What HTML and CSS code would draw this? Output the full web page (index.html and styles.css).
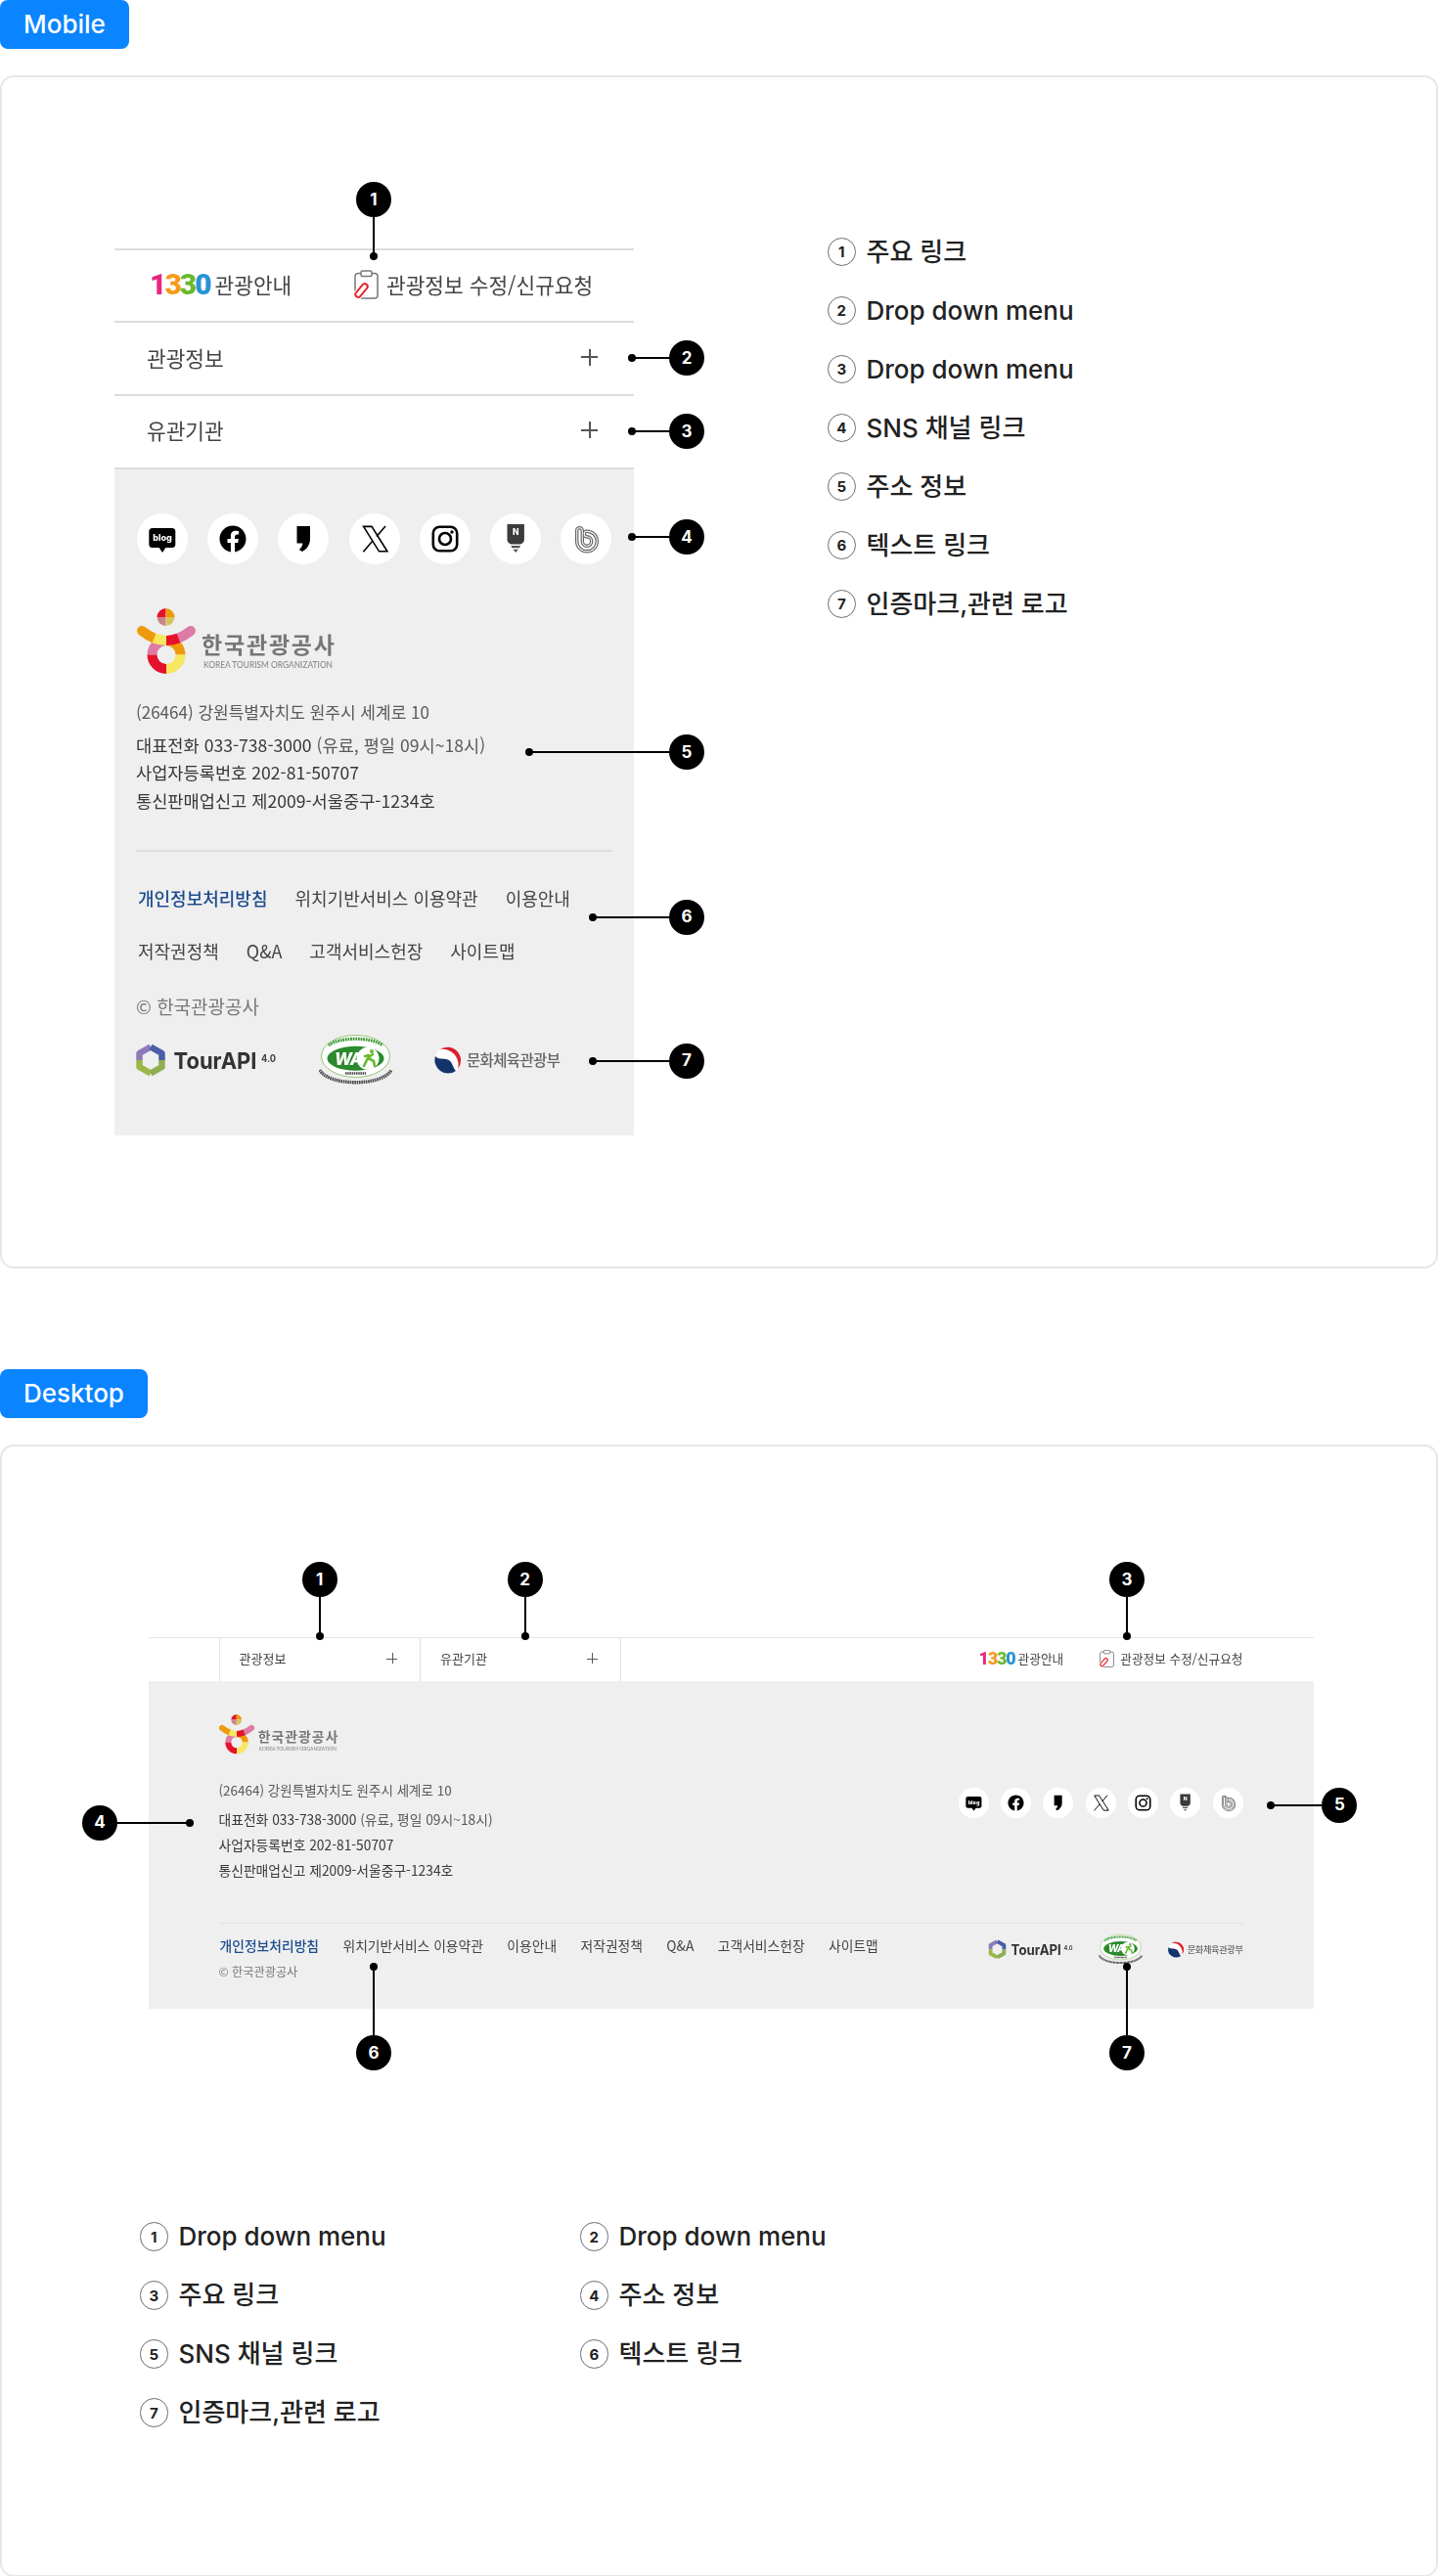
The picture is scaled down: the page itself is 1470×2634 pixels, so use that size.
FILE: index.html
```html
<!DOCTYPE html>
<html lang="ko">
<head>
<meta charset="utf-8">
<title>Footer guide</title>
<link rel="stylesheet" href="styles.css">
</head>
<body>
<svg class="defs" aria-hidden="true">
  <symbol id="i-blog" viewBox="0 0 52 52">
    <rect x="12.3" y="15" width="27" height="20" rx="3.5" fill="#000"/>
    <path d="M22 34h8l-4 6z" fill="#000"/>
  </symbol>
  <symbol id="i-fb" viewBox="0 0 52 52">
    <path transform="translate(12.5 12.5) scale(1.125)" fill="#000" d="M24 12.073c0-6.627-5.373-12-12-12s-12 5.373-12 12c0 5.99 4.388 10.954 10.125 11.854v-8.385H7.078v-3.47h3.047V9.43c0-3.007 1.792-4.669 4.533-4.669 1.312 0 2.686.235 2.686.235v2.953H15.83c-1.491 0-1.956.925-1.956 1.874v2.25h3.328l-.532 3.47h-2.796v8.385C19.612 23.027 24 18.062 24 12.073z"/>
  </symbol>
  <symbol id="i-comma" viewBox="0 0 52 52">
    <path fill="#000" d="M19.5 13H33v13c0 5.5-2.8 10.4-8.2 13L21.8 37c2-1.6 3.2-3.6 3.6-6.500h-5.900z"/>
  </symbol>
  <symbol id="i-x" viewBox="0 0 52 52">
    <g fill="none" stroke="#000" stroke-width="1.6">
      <path d="M14.6 13.4H23L38.9 38.800H30.500Z"/>
      <path d="M37 13 28 23.500M24 28 14.300 39.200"/>
    </g>
  </symbol>
  <symbol id="i-ig" viewBox="0 0 52 52">
    <rect x="13.8" y="13.8" width="24.4" height="24.4" rx="6.5" fill="none" stroke="#000" stroke-width="2.6"/>
    <circle cx="26" cy="26" r="6" fill="none" stroke="#000" stroke-width="2.6"/>
    <circle cx="33" cy="19" r="1.7" fill="#000"/>
  </symbol>
  <symbol id="i-post" viewBox="0 0 52 52">
    <path fill="#3b3b3e" d="M17.5 11h17.4v16c0 2.4-2.500 4-4 4.600h-9.400c-1.500-.6-4-2.200-4-4.600z"/>
    <path fill="#55555a" d="M21.500 33h9.400l-.8 2.200h-7.800zM23.500 36.800h5.400l-2.700 3.200z"/>
  </symbol>
  <symbol id="i-band" viewBox="0 0 52 52">
    <g fill="none" stroke-linecap="round">
      <path d="M19.500 17.500V28.500A7.500 7.500 0 1 0 27 21" stroke="#666" stroke-width="9"/>
      <path d="M19.500 17.500V28.500A7.500 7.500 0 1 0 27 21" stroke="#fff" stroke-width="6.600"/>
      <path d="M19.500 17.500V28.500A7.500 7.500 0 1 0 27 21" stroke="#666" stroke-width="4.600"/>
      <path d="M19.500 17.500V28.500A7.500 7.500 0 1 0 27 21" stroke="#fff" stroke-width="2.200"/>
    </g>
  </symbol>
  <symbol id="i-clip" viewBox="0 0 25 30">
    <rect x="1" y="3.500" width="23" height="25.500" rx="3" fill="none" stroke="#777" stroke-width="1.500"/>
    <rect x="7" y="1" width="11" height="5.500" rx="1.500" fill="#fff" stroke="#777" stroke-width="1.500"/>
    <rect x="-9" y="-3.500" width="18" height="7" rx="3.500" transform="translate(7.500 21) rotate(-50)" fill="#fff" stroke="#fff" stroke-width="3"/>
    <rect x="-8" y="-2.800" width="16" height="5.600" rx="2.800" transform="translate(7.500 21) rotate(-50)" fill="none" stroke="#e8242f" stroke-width="2"/>
  </symbol>
  <symbol id="l-kto" viewBox="0 0 203 68">
    <g fill="none">
      <path d="M29.500 9V0A9 9 0 0 0 20.500 9z" fill="#e5122c"/>
      <path d="M29.500 9V0A9 9 0 0 1 38.500 9z" fill="#ef9a0d"/>
      <path d="M29.500 9H20.500A9 9 0 0 0 29.500 18z" fill="#c9858e"/>
      <path d="M29.500 9H38.500A9 9 0 0 1 29.500 18z" fill="#d6c65e"/>
      <g stroke-width="10">
        <path d="M15.500 47.500A14.500 14.500 0 0 1 30 33" stroke="#dd7ba6"/>
        <path d="M30 33A14.500 14.500 0 0 1 44.500 47.500" stroke="#ef9a0d"/>
        <path d="M44.500 47.500A14.500 14.500 0 0 1 30 62" stroke="#f7e660"/>
        <path d="M30 62A14.500 14.500 0 0 1 15.500 47.500" stroke="#e5122c"/>
        <path d="M5 23Q11.250 28 17.500 30.500" stroke="#ef9a0d" stroke-linecap="round"/>
        <path d="M55 23Q48.750 28 42.500 30.500" stroke="#dd7ba6" stroke-linecap="round"/>
        <path d="M17.500 30.500Q23.750 33 30 33" stroke="#f7e660"/>
        <path d="M30 33Q36.250 33 42.500 30.500" stroke="#e5122c"/>
      </g>
    </g>
  </symbol>
  <symbol id="l-tour" viewBox="0 0 143 34">
    <g fill="none" stroke-width="6.500" stroke-linejoin="round">
      <path d="M15 3.500L3.500 10V17" stroke="#8d7ab8"/>
      <path d="M15 3.500L26.500 10V17" stroke="#4a5fa8"/>
      <path d="M3.500 17V24L15 30.500" stroke="#9ab848"/>
      <path d="M26.500 17V24L15 30.500" stroke="#8fae52"/>
    </g>
  </symbol>
  <symbol id="l-wa" viewBox="0 0 75 52">
    <ellipse cx="37.500" cy="22" rx="35" ry="21.500" fill="#fff" stroke="#8fc56e" stroke-width="1"/>
    <path d="M10 11C20 2 55 2 65 11" fill="none" stroke="#3f9a3a" stroke-width="3.200" stroke-dasharray="1.800 .8"/>
    <ellipse cx="37.500" cy="24.300" rx="29" ry="12.500" fill="#2b8a2c"/>
    <circle cx="50" cy="24.300" r="11.500" fill="#fff"/>
    <path d="M46 32l4-8 5-4M50 24l6 3 1 5M47 22l4-1" fill="none" stroke="#69b92f" stroke-width="2.600" stroke-linecap="round"/>
    <circle cx="54" cy="17" r="2" fill="#69b92f"/>
    <path d="M27 39.500h21" stroke="#444" stroke-width="2.400" stroke-dasharray="1.500 .7"/>
    <path d="M.8 36C10 53 65 53 74.200 36" fill="none" stroke="#4a4a4a" stroke-width="3.400" stroke-dasharray="1.600 .7"/>
  </symbol>
  <symbol id="l-mcst" viewBox="0 0 129 28">
    <circle cx="14" cy="14" r="13.500" fill="#fff"/>
    <path d="M1 10A13.600 13.600 0 0 0 22 25C18.500 21 18.500 14.500 13 13.200C8 12 3.500 13.500 1 10Z" fill="#12336b"/>
    <path d="M6 3A13.600 13.600 0 0 1 24 23A16 16 0 0 0 6 3Z" fill="#d9222c"/>
  </symbol>
</svg>

<section class="sec">
  <div class="tag">Mobile</div>
  <div class="card card-m">
    <div class="mob">
      <div class="mob-row mob-quick">
        <a class="q-1330"><span class="num1330"><b class="c1">1</b><b class="c2">3</b><b class="c3">3</b><b class="c4">0</b></span><span>관광안내</span></a>
        <a class="q-req"><svg class="ic-clip"><use href="#i-clip"/></svg><span>관광정보 수정/신규요청</span></a>
      </div>
      <div class="mob-row mob-acc"><span>관광정보</span><i class="plus"></i></div>
      <div class="mob-row mob-acc"><span>유관기관</span><i class="plus"></i></div>
      <div class="mob-foot">
        <ul class="sns">
          <li><svg viewBox="0 0 52 52"><use href="#i-blog"/><text x="26" y="28.2" class="t-blog">blog</text></svg></li>
          <li><svg><use href="#i-fb"/></svg></li>
          <li><svg><use href="#i-comma"/></svg></li>
          <li><svg><use href="#i-x"/></svg></li>
          <li><svg><use href="#i-ig"/></svg></li>
          <li><svg viewBox="0 0 52 52"><use href="#i-post"/><text x="26.2" y="21.5" class="t-post">N</text></svg></li>
          <li><svg><use href="#i-band"/></svg></li>
        </ul>
        <svg class="kto" viewBox="0 0 203 68"><use href="#l-kto"/><text x="66" y="46" textLength="136" lengthAdjust="spacing" class="t-kto">한국관광공사</text><text x="68" y="61" textLength="132" lengthAdjust="spacingAndGlyphs" class="t-kto-en">KOREA TOURISM ORGANIZATION</text></svg>
        <div class="addr">
          <p class="addr-first">(26464) 강원특별자치도 원주시 세계로 10</p>
          <p>대표전화 033-738-3000 <em>(유료, 평일 09시~18시)</em></p>
          <p>사업자등록번호 202-81-50707</p>
          <p>통신판매업신고 제2009-서울중구-1234호</p>
        </div>
        <hr class="rule">
        <ul class="links">
          <li class="strong">개인정보처리방침</li>
          <li>위치기반서비스 이용약관</li>
          <li>이용안내</li>
          <li>저작권정책</li>
          <li>Q&amp;A</li>
          <li>고객서비스헌장</li>
          <li>사이트맵</li>
        </ul>
        <p class="copy">© 한국관광공사</p>
        <div class="marks">
          <svg class="tour" viewBox="0 0 143 34"><use href="#l-tour"/><text x="38.5" y="26" textLength="85" lengthAdjust="spacingAndGlyphs" class="t-tour">TourAPI</text><text x="128" y="19" textLength="15" lengthAdjust="spacingAndGlyphs" class="t-ver">4.0</text></svg>
          <svg class="wa" viewBox="0 0 75 52"><use href="#l-wa"/><text x="16" y="30.5" class="t-wa">WA</text></svg>
          <svg class="mcst" viewBox="0 0 129 28"><use href="#l-mcst"/><text x="33" y="19.5" textLength="96" lengthAdjust="spacing" class="t-mcst">문화체육관광부</text></svg>
        </div>
      </div>
    </div>
    <ol class="legend">
      <li><b>1</b>주요 링크</li>
      <li><b>2</b>Drop down menu</li>
      <li><b>3</b>Drop down menu</li>
      <li><b>4</b>SNS 채널 링크</li>
      <li><b>5</b>주소 정보</li>
      <li><b>6</b>텍스트 링크</li>
      <li><b>7</b>인증마크,관련 로고</li>
    </ol>
    <span class="co down m1">1</span>
    <span class="co left m2">2</span>
    <span class="co left m3">3</span>
    <span class="co left m4">4</span>
    <span class="co left m5">5</span>
    <span class="co left m6">6</span>
    <span class="co left m7">7</span>
  </div>
</section>

<section class="sec sec-d">
  <div class="tag">Desktop</div>
  <div class="card card-d">
    <div class="desk">
      <div class="desk-top">
        <div class="cell"><span>관광정보</span><i class="plus"></i></div>
        <div class="cell"><span>유관기관</span><i class="plus"></i></div>
        <div class="desk-quick">
          <a class="q-1330"><span class="num1330"><b class="c1">1</b><b class="c2">3</b><b class="c3">3</b><b class="c4">0</b></span><span>관광안내</span></a>
          <a class="q-req"><svg class="ic-clip"><use href="#i-clip"/></svg><span>관광정보 수정/신규요청</span></a>
        </div>
      </div>
      <div class="desk-foot">
        <div class="desk-main">
          <div>
            <svg class="kto" viewBox="0 0 203 68"><use href="#l-kto"/><text x="66" y="46" textLength="136" lengthAdjust="spacing" class="t-kto">한국관광공사</text><text x="68" y="61" textLength="132" lengthAdjust="spacingAndGlyphs" class="t-kto-en">KOREA TOURISM ORGANIZATION</text></svg>
            <div class="addr">
              <p class="addr-first">(26464) 강원특별자치도 원주시 세계로 10</p>
              <p>대표전화 033-738-3000 <em>(유료, 평일 09시~18시)</em></p>
              <p>사업자등록번호 202-81-50707</p>
              <p>통신판매업신고 제2009-서울중구-1234호</p>
            </div>
          </div>
          <ul class="sns">
            <li><svg viewBox="0 0 52 52"><use href="#i-blog"/><text x="26" y="28.2" class="t-blog">blog</text></svg></li>
            <li><svg><use href="#i-fb"/></svg></li>
            <li><svg><use href="#i-comma"/></svg></li>
            <li><svg><use href="#i-x"/></svg></li>
            <li><svg><use href="#i-ig"/></svg></li>
            <li><svg viewBox="0 0 52 52"><use href="#i-post"/><text x="26.2" y="21.5" class="t-post">N</text></svg></li>
            <li><svg><use href="#i-band"/></svg></li>
          </ul>
        </div>
        <div class="desk-bottom">
          <div>
            <ul class="links">
              <li class="strong">개인정보처리방침</li>
              <li>위치기반서비스 이용약관</li>
              <li>이용안내</li>
              <li>저작권정책</li>
              <li>Q&amp;A</li>
              <li>고객서비스헌장</li>
              <li>사이트맵</li>
            </ul>
            <p class="copy">© 한국관광공사</p>
          </div>
          <div class="marks">
            <svg class="tour" viewBox="0 0 143 34"><use href="#l-tour"/><text x="38.5" y="26" textLength="85" lengthAdjust="spacingAndGlyphs" class="t-tour">TourAPI</text><text x="128" y="19" textLength="15" lengthAdjust="spacingAndGlyphs" class="t-ver">4.0</text></svg>
            <svg class="wa" viewBox="0 0 75 52"><use href="#l-wa"/><text x="16" y="30.5" class="t-wa">WA</text></svg>
            <svg class="mcst" viewBox="0 0 129 28"><use href="#l-mcst"/><text x="33" y="19.5" textLength="96" lengthAdjust="spacing" class="t-mcst">문화체육관광부</text></svg>
          </div>
        </div>
      </div>
    </div>
    <ol class="legend">
      <li><b>1</b>Drop down menu</li>
      <li><b>2</b>Drop down menu</li>
      <li><b>3</b>주요 링크</li>
      <li><b>4</b>주소 정보</li>
      <li><b>5</b>SNS 채널 링크</li>
      <li><b>6</b>텍스트 링크</li>
      <li><b>7</b>인증마크,관련 로고</li>
    </ol>
    <span class="co down d1">1</span>
    <span class="co down d2">2</span>
    <span class="co down d3">3</span>
    <span class="co right d4">4</span>
    <span class="co left d5">5</span>
    <span class="co up d6">6</span>
    <span class="co up d7">7</span>
  </div>
</section>
</body>
</html>
```

FILE: styles.css
```css
* { box-sizing: border-box; }
html, body { margin: 0; padding: 0; }
body {
  background: #fff;
  color: #222;
  font-family: "Noto Sans CJK KR", "Noto Sans", sans-serif;
}
p, ul, ol { margin: 0; padding: 0; list-style: none; }
em { font-style: normal; }
.defs { position: absolute; width: 0; height: 0; overflow: hidden; }

/* section chrome */
.sec-d { margin-top: 103px; }
.tag {
  display: inline-flex;
  align-items: center;
  vertical-align: top;
  height: 50px;
  padding: 0 24px;
  background: #0a84ff;
  border-radius: 8px;
  color: #fff;
  font: 500 26px/1 Inter, "Noto Sans CJK KR", sans-serif;
}
.card {
  position: relative;
  margin-top: 27px;
  border: 2px solid #e6e6ec;
  border-radius: 14px;
  background: #fff;
}
.card-m {
  display: flex;
  height: 1220px;
  padding: 174.7px 0 0 115px;
}
.card-d {
  height: 1158px;
  padding: 194.5px 0 0 149.5px;
}

/* legend */
.legend {
  display: grid;
  row-gap: 30px;
  font: 500 26px/30px Inter, "Noto Sans CJK KR", sans-serif;
  color: #222;
}
.legend li { display: flex; align-items: center; gap: 10.5px; height: 30px; white-space: nowrap; }
.legend b {
  flex: none;
  width: 29.5px;
  height: 29.5px;
  display: flex;
  align-items: center;
  justify-content: center;
  border: 1.5px solid #6c6c74;
  border-radius: 50%;
  font: 700 15px/1 Inter, sans-serif;
}
.card-m .legend {
  align-content: start;
  margin: -11px 0 0 197.5px;
}
.card-d .legend {
  grid-template-columns: 450px 1fr;
  margin: 218.5px 0 0 -9px;
}

/* shared pieces */
.plus { position: relative; display: block; flex: none; }
.plus::before, .plus::after { content: ""; position: absolute; background: #555; }
.plus::before { left: 0; right: 0; top: 50%; height: 2px; margin-top: -1px; }
.plus::after { top: 0; bottom: 0; left: 50%; width: 2px; margin-left: -1px; }
.q-1330, .q-req { display: flex; align-items: center; }
.num1330 { font-family: Roboto, sans-serif; }
.num1330 b { font-weight: 900; }
.c1 { color: #e6287f; }
.c2 { color: #f59a1b; }
.c3 { color: #6ab92e; }
.c4 { color: #2a93d5; }
.sns { display: flex; }
.sns li { flex: none; border-radius: 50%; background: #fff; }
.sns svg { display: block; width: 100%; height: 100%; }
.links { display: flex; flex-wrap: wrap; color: #444; }
.links .strong { color: #1c4d8f; font-weight: 500; }
.addr { color: #383838; }
.addr-first, .addr em { color: #5a5a5a; }
.copy { color: #777; }
.rule { border: 0; margin: 0; }
.marks { display: flex; align-items: center; }
.kto, .tour, .wa, .mcst, .ic-clip { display: block; flex: none; }

/* svg text */
.t-blog { font: 800 9px Inter, sans-serif; fill: #fff; text-anchor: middle; }
.t-post { font: 800 8.5px Inter, sans-serif; fill: #fff; text-anchor: middle; }
.t-kto { font: 600 23px "Noto Sans CJK KR", sans-serif; fill: #777; }
.t-kto-en { font: 500 9px Lato, sans-serif; fill: #8a8a8a; }
.t-tour { font: 700 23.5px Inter, sans-serif; fill: #333; }
.t-ver { font: 700 11px Inter, sans-serif; fill: #444; }
.t-wa { font: italic 800 17px Inter, sans-serif; fill: #fff; letter-spacing: -1px; }
.t-mcst { font: 500 15.5px "Noto Sans CJK KR", sans-serif; fill: #666; }

/* mobile panel */
.mob { flex: none; width: 531px; filter: blur(.35px); }
.mob-row {
  display: flex;
  align-items: center;
  height: 74.67px;
  padding-bottom: 3px;
  border-top: 2px solid #dcdcdc;
  font-size: 21.4px;
  color: #444;
}
.mob-quick { padding-left: 36px; }
.mob-quick .q-1330 { width: 209px; gap: 5px; }
.mob-quick .num1330 { font-size: 30px; letter-spacing: -2px; line-height: 1; }
.mob-quick .q-req { gap: 8px; }
.mob .ic-clip { width: 25px; height: 30px; }
.mob-acc { justify-content: space-between; padding: 0 37px 3px 33px; }
.mob .plus { width: 17px; height: 17px; }
.mob-foot {
  height: 683.33px;
  padding: 45px 22px 0;
  background: #efefef;
  border-top: 2px solid #dcdcdc;
}
.mob .sns { gap: 20.2px; padding-left: 1px; }
.mob .sns li { width: 52px; height: 52px; }
.mob .kto { width: 203px; height: 68px; margin: 45.5px 0 0 1px; }
.mob .addr { margin-top: 23.5px; font-size: 17.6px; line-height: 28.6px; }
.mob .addr-first { margin-bottom: 5.5px; font-size: 17px; }
.mob .rule { margin-top: 35px; height: 2px; background: #dcdcdc; }
.mob .links { margin-top: 32px; padding-left: 2px; font-size: 18px; line-height: 30px; row-gap: 24.6px; column-gap: 28px; }
.mob .copy { margin-top: 26.5px; font-size: 19px; line-height: 30px; }
.mob .marks { margin-top: 14.5px; }
.mob .tour { width: 143px; height: 34px; }
.mob .wa { width: 75px; height: 52px; margin-left: 44px; }
.mob .mcst { width: 129px; height: 28px; margin-left: 43px; }

/* desktop panel */
.desk { width: 1191px; filter: blur(.3px); }
.desk-top {
  display: flex;
  height: 45px;
  padding-left: 72px;
  border-top: 1px solid #e6e6e6;
  font-size: 13px;
  color: #444;
}
.cell {
  display: flex;
  align-items: center;
  justify-content: space-between;
  width: 205.6px;
  padding: 0 23px 2px 20px;
  border-left: 1px solid #e2e2e2;
}
.cell:nth-child(2) { border-right: 1px solid #e2e2e2; }
.cell .plus { width: 11px; height: 11px; }
.cell .plus::before { height: 1px; margin-top: 0; }
.cell .plus::after { width: 1px; margin-left: 0; }
.desk-quick { display: flex; align-items: center; margin-left: auto; padding: 0 72px 2px 0; gap: 37px; font-size: 12.7px; }
.desk-quick .q-1330 { gap: 3px; }
.desk-quick .num1330 { font-size: 18px; letter-spacing: -1.2px; line-height: 1; }
.desk-quick .q-req { gap: 6px; }
.desk .ic-clip { width: 15px; height: 18px; }
.desk-foot {
  height: 335px;
  padding: 34.5px 72px 0;
  background: #efefef;
}
.desk-main { display: flex; justify-content: space-between; align-items: flex-start; height: 212.5px; }
.desk .kto { width: 122px; height: 41px; }
.desk .addr { margin-top: 23px; font-size: 13.8px; line-height: 26.2px; }
.desk .addr-first { margin-bottom: 3.6px; font-size: 13.5px; }
.desk .sns { gap: 12.3px; margin-top: 75px; }
.desk .sns li { width: 31px; height: 31px; }
.desk-bottom {
  display: flex;
  justify-content: space-between;
  border-top: 1.5px solid #e2e2e6;
}
.desk .links { margin-top: 10px; padding-left: 1px; font-size: 13.8px; line-height: 24px; column-gap: 24.4px; }
.desk .copy { margin-top: 4px; font-size: 12.2px; line-height: 22px; }
.desk .marks { margin-top: 11.5px; align-self: flex-start; }
.desk .tour { width: 87px; height: 20.5px; }
.desk .wa { width: 45px; height: 31px; margin-left: 26px; }
.desk .mcst { width: 77px; height: 17px; margin-left: 26px; }

/* numbered callouts laid over the mock-ups */
.co {
  position: absolute;
  display: flex;
  align-items: center;
  justify-content: center;
  width: 36px;
  height: 36px;
  border-radius: 50%;
  background: #000;
  color: #fff;
  font: 700 17px/1 Inter, sans-serif;
  --len: 40px;
}
.co::before, .co::after { content: ""; position: absolute; background: #000; }
.co::after { width: 8px; height: 8px; border-radius: 50%; }
.co.down::before { top: 100%; left: 17px; width: 2px; height: var(--len); }
.co.down::after { top: calc(100% + var(--len) - 4px); left: 14px; }
.co.up::before { bottom: 100%; left: 17px; width: 2px; height: var(--len); }
.co.up::after { bottom: calc(100% + var(--len) - 4px); left: 14px; }
.co.left::before { right: 100%; top: 17px; height: 2px; width: var(--len); }
.co.left::after { right: calc(100% + var(--len) - 4px); top: 14px; }
.co.right::before { left: 100%; top: 17px; height: 2px; width: var(--len); }
.co.right::after { left: calc(100% + var(--len) - 4px); top: 14px; }

.m1 { left: 362px; top: 107px; }
.m2 { left: 682px; top: 269px; --len: 38px; }
.m3 { left: 682px; top: 344px; --len: 38px; }
.m4 { left: 682px; top: 452px; --len: 38px; }
.m5 { left: 682px; top: 672px; --len: 143px; }
.m6 { left: 682px; top: 840.5px; --len: 78px; }
.m7 { left: 682px; top: 987.5px; --len: 78px; }
.d1 { left: 306.6px; top: 118px; }
.d2 { left: 516.6px; top: 118px; }
.d3 { left: 1132px; top: 118px; }
.d4 { left: 82px; top: 366.6px; --len: 73.5px; }
.d5 { left: 1349.4px; top: 348.6px; --len: 52.7px; }
.d6 { left: 362px; top: 602px; --len: 70px; }
.d7 { left: 1132px; top: 602px; --len: 70px; }
```
